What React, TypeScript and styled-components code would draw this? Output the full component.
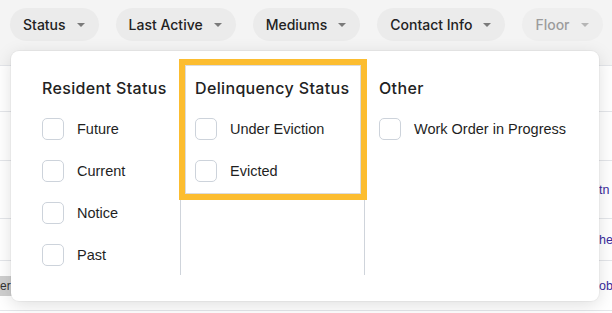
import styled, { createGlobalStyle } from 'styled-components';

const GlobalStyle = createGlobalStyle`
  html, body {
    margin: 0;
    padding: 0;
    background: #ffffff;
    overflow: hidden;
  }
  * {
    box-sizing: border-box;
  }
`

const Page = styled.div`
  position: relative;
  width: 612px;
  height: 313px;
  overflow: hidden;
  background: #ffffff;
`

const FilterBar = styled.div`
  display: flex;
  align-items: flex-start;
  gap: 17px;
  height: 66px;
  padding: 8px 0 0 10px;
  background: #f4f4f4;
  border-bottom: 1px solid #e4e6ea;
`

const Pill = styled.button<{ $disabled?: boolean }>`
  display: flex;
  align-items: center;
  flex-shrink: 0;
  gap: 11px;
  height: 33px;
  padding: 0 14px 0 13px;
  border: none;
  border-radius: 17px;
  background: ${(p) => (p.$disabled ? '#eeeeee' : '#ebebeb')};
  color: ${(p) => (p.$disabled ? '#9c9c9c' : '#222222')};
  font-family: Inter, "Open Sans", sans-serif;
  font-size: 14px;
  font-weight: 500;
  white-space: nowrap;
`

const Caret = styled.span<{ $disabled?: boolean }>`
  width: 0;
  height: 0;
  border-left: 4px solid transparent;
  border-right: 4px solid transparent;
  border-top: 4px solid ${(p) => (p.$disabled ? '#b5b5b5' : '#7a7a7a')};
`

const Table = styled.div`
  display: flex;
  flex-direction: column;
`

const Row = styled.div<{ $h: number }>`
  display: flex;
  align-items: center;
  justify-content: space-between;
  height: ${(p) => p.$h}px;
  border-bottom: 1px solid #e4e6ea;
  font-family: "Liberation Sans", Arial, sans-serif;
  font-size: 14px;
`

const Tag = styled.span`
  display: flex;
  align-items: center;
  height: 20px;
  padding: 0 1px 0 0;
  background: #cfcfcf;
  color: #333333;
  font-size: 12px;
`

const LinkText = styled.span`
  width: 13px;
  white-space: nowrap;
  font-size: 12.5px;
  color: #3a2b9c;
`

const Popover = styled.div`
  position: absolute;
  top: 51px;
  left: 11px;
  width: 588px;
  height: 250px;
  display: flex;
  padding: 8px 17px 0;
  background: #ffffff;
  border-radius: 8px;
  box-shadow: 0 4px 18px rgba(0, 0, 0, 0.13), 0 0 0 1px rgba(0, 0, 0, 0.03);
`

const Column = styled.div<{ $w?: number; $divider?: boolean }>`
  position: relative;
  ${(p) => (p.$w ? `width: ${p.$w}px;` : 'flex: 1;')}
  height: 216px;
  padding: 18px 13px 0 14px;
  border-right: ${(p) => (p.$divider ? '1px solid #cfd4db' : 'none')};
`

const Highlight = styled.div`
  position: absolute;
  top: 0;
  left: -2px;
  right: -3px;
  height: 141px;
  border: 6px solid #fcbd30;
  box-shadow: inset 0 0 0 1px #dcdcdc;
  pointer-events: none;
`

const Heading = styled.h3`
  margin: 0 0 9px;
  height: 22px;
  line-height: 22px;
  font-family: Inter, "Open Sans", sans-serif;
  font-size: 16px;
  font-weight: 500;
  letter-spacing: 0.35px;
  color: #222222;
  white-space: nowrap;
`

const Option = styled.label`
  display: flex;
  align-items: center;
  gap: 13px;
  height: 42px;
  font-family: "Liberation Sans", Arial, sans-serif;
  font-size: 14.5px;
  color: #1f1f1f;
  white-space: nowrap;
`

const Box = styled.span`
  width: 22px;
  height: 22px;
  flex-shrink: 0;
  border: 1px solid #cdd3db;
  border-radius: 5px;
  background: #ffffff;
`

const filters = [
  { label: 'Status' },
  { label: 'Last Active' },
  { label: 'Mediums' },
  { label: 'Contact Info' },
  { label: 'Floor', disabled: true },
]

const rows = [
  { h: 46, tag: '', link: '' },
  { h: 49, tag: '', link: '' },
  { h: 58, tag: '', link: 'tn' },
  { h: 42, tag: '', link: 'he' },
  { h: 50, tag: 'er', link: 'ob' },
]

const groups = [
  { title: 'Resident Status', width: 153, divider: true, items: ['Future', 'Current', 'Notice', 'Past'] },
  { title: 'Delinquency Status', width: 184, divider: true, highlight: true, items: ['Under Eviction', 'Evicted'] },
  { title: 'Other', items: ['Work Order in Progress'] },
]

export default function App() {
  return (
    <Page>
      <GlobalStyle />
      <FilterBar>
        {filters.map((f) => (
          <Pill key={f.label} $disabled={f.disabled}>
            {f.label}
            <Caret $disabled={f.disabled} />
          </Pill>
        ))}
      </FilterBar>
      <Table>
        {rows.map((r, i) => (
          <Row key={i} $h={r.h}>
            {r.tag ? <Tag>{r.tag}</Tag> : <span />}
            <LinkText>{r.link}</LinkText>
          </Row>
        ))}
      </Table>
      <Popover>
        {groups.map((g) => (
          <Column key={g.title} $w={g.width} $divider={g.divider}>
            {g.highlight && <Highlight />}
            <Heading>{g.title}</Heading>
            {g.items.map((item) => (
              <Option key={item}>
                <Box />
                {item}
              </Option>
            ))}
          </Column>
        ))}
      </Popover>
    </Page>
  )
}
